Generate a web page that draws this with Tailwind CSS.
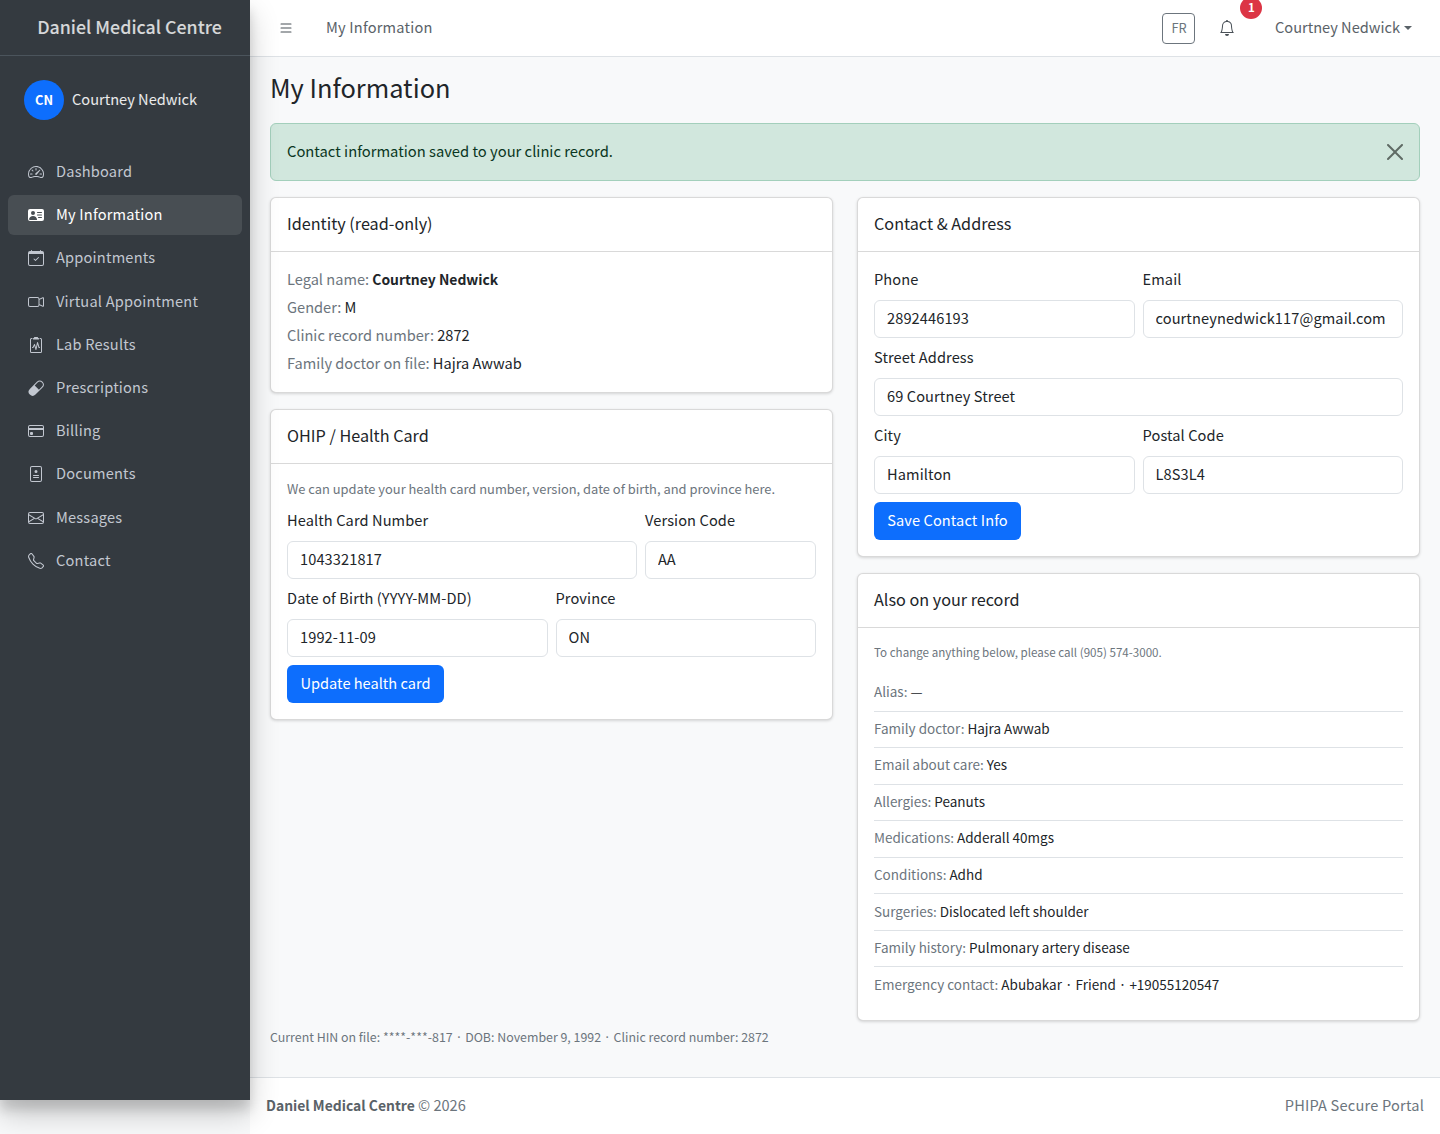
<!DOCTYPE html>
<html lang="en"><head><meta charset="utf-8"><title>My Information</title>
<script src="https://cdn.jsdelivr.net/npm/@tailwindcss/browser@4"></script></head>
<body class="bg-[#f8f9fa] font-['Noto_Sans_CJK_KR',sans-serif] text-[14.6px] leading-6 text-[#212529]">
<div class="flex w-[1440px] h-[1134px] overflow-hidden">
<aside class="w-[250px] h-[1100px] shrink-0 bg-[#343a40] shadow-[0_14px_28px_rgba(0,0,0,.2),0_10px_10px_rgba(0,0,0,.12)] z-10">
  <div class="h-[56px] border-b border-[#4b545c] flex items-center justify-center pl-[9px] pb-1 text-[17.8px] font-medium text-white/80">Daniel Medical Centre</div>
  <div class="flex items-center gap-2 pl-6 pt-6 pb-8 text-white/90">
    <div class="w-10 h-10 rounded-full bg-[#0d6efd] text-white text-[12.8px] font-bold flex items-center justify-center">CN</div>
    <span class="pb-0.5">Courtney Nedwick</span>
  </div>
  <nav class="px-2 flex flex-col gap-[3.2px] text-[#c2c7d0] tracking-[.2px]">
    <a class="h-10 flex items-center gap-3 pl-5 rounded-md"><svg class="w-4 h-4" fill="currentColor" viewBox="0 0 16 16"><path d="M8 4a.5.5 0 0 1 .5.5V6a.5.5 0 0 1-1 0V4.5A.5.5 0 0 1 8 4zM3.732 5.732a.5.5 0 0 1 .707 0l.915.914a.5.5 0 1 1-.708.708l-.914-.915a.5.5 0 0 1 0-.707zM2 10a.5.5 0 0 1 .5-.5h1.586a.5.5 0 0 1 0 1H2.5A.5.5 0 0 1 2 10zm9.5 0a.5.5 0 0 1 .5-.5h1.5a.5.5 0 0 1 0 1H12a.5.5 0 0 1-.5-.5zm.754-4.246a.389.389 0 0 0-.527-.02L7.547 9.31a.91.91 0 1 0 1.302 1.258l3.434-4.297a.389.389 0 0 0-.029-.518z"/><path fill-rule="evenodd" d="M0 10a8 8 0 1 1 15.547 2.661c-.442 1.253-1.845 1.602-2.932 1.25C11.309 13.488 9.475 13 8 13c-1.474 0-3.31.488-4.615.911-1.087.352-2.49.003-2.932-1.25A7.988 7.988 0 0 1 0 10zm8-7a7 7 0 0 0-6.603 9.329c.203.575.923.876 1.68.63C4.397 12.533 6.358 12 8 12s3.604.532 4.923.96c.757.245 1.477-.056 1.68-.631A7 7 0 0 0 8 3z"/></svg><span class="pb-0.5">Dashboard</span></a>
    <a class="h-10 flex items-center gap-3 pl-5 rounded-md bg-white/10 text-white"><svg class="w-4 h-4" fill="currentColor" viewBox="0 0 16 16"><path d="M0 4a2 2 0 0 1 2-2h12a2 2 0 0 1 2 2v8a2 2 0 0 1-2 2H2a2 2 0 0 1-2-2V4Zm9 1.5a.5.5 0 0 0 .5.5h4a.5.5 0 0 0 0-1h-4a.5.5 0 0 0-.5.5ZM9 8a.5.5 0 0 0 .5.5h4a.5.5 0 0 0 0-1h-4A.5.5 0 0 0 9 8Zm1 2.5a.5.5 0 0 0 .5.5h3a.5.5 0 0 0 0-1h-3a.5.5 0 0 0-.5.5Zm-1 2C9 10.567 7.21 9 5 9c-2.086 0-3.8 1.398-3.984 3.181A1 1 0 0 0 2 13h6.96c.026-.163.04-.33.04-.5ZM7 6a2 2 0 1 0-4 0 2 2 0 0 0 4 0Z"/></svg><span class="pb-0.5">My Information</span></a>
    <a class="h-10 flex items-center gap-3 pl-5 rounded-md"><svg class="w-4 h-4" fill="currentColor" viewBox="0 0 16 16"><path d="M10.854 7.146a.5.5 0 0 1 0 .708l-3 3a.5.5 0 0 1-.708 0l-1.5-1.5a.5.5 0 1 1 .708-.708L7.5 9.793l2.646-2.647a.5.5 0 0 1 .708 0z"/><path d="M3.5 0a.5.5 0 0 1 .5.5V1h8V.5a.5.5 0 0 1 1 0V1h1a2 2 0 0 1 2 2v11a2 2 0 0 1-2 2H2a2 2 0 0 1-2-2V3a2 2 0 0 1 2-2h1V.5a.5.5 0 0 1 .5-.5zM1 4v10a1 1 0 0 0 1 1h12a1 1 0 0 0 1-1V4H1z"/></svg><span class="pb-0.5">Appointments</span></a>
    <a class="h-10 flex items-center gap-3 pl-5 rounded-md"><svg class="w-4 h-4" fill="currentColor" viewBox="0 0 16 16"><path fill-rule="evenodd" d="M0 5a2 2 0 0 1 2-2h7.5a2 2 0 0 1 1.983 1.738l3.11-1.382A1 1 0 0 1 16 4.269v7.462a1 1 0 0 1-1.406.913l-3.111-1.382A2 2 0 0 1 9.5 13H2a2 2 0 0 1-2-2V5zm11.5 5.175 3.5 1.556V4.269l-3.5 1.556v4.35zM2 4a1 1 0 0 0-1 1v6a1 1 0 0 0 1 1h7.5a1 1 0 0 0 1-1V5a1 1 0 0 0-1-1H2z"/></svg><span class="pb-0.5">Virtual Appointment</span></a>
    <a class="h-10 flex items-center gap-3 pl-5 rounded-md"><svg class="w-4 h-4" fill="currentColor" viewBox="0 0 16 16"><path d="M9.5 0a.5.5 0 0 1 .5.5.5.5 0 0 0 .5.5.5.5 0 0 1 .5.5V2a.5.5 0 0 1-.5.5h-5A.5.5 0 0 1 5 2v-.5a.5.5 0 0 1 .5-.5.5.5 0 0 0 .5-.5.5.5 0 0 1 .5-.5h3Z"/><path d="M3 2.5a.5.5 0 0 1 .5-.5H4a.5.5 0 0 0 0-1h-.5A1.5 1.5 0 0 0 2 2.5v12A1.5 1.5 0 0 0 3.5 16h9a1.5 1.5 0 0 0 1.5-1.5v-12A1.5 1.5 0 0 0 12.5 1H12a.5.5 0 0 0 0 1h.5a.5.5 0 0 1 .5.5v12a.5.5 0 0 1-.5.5h-9a.5.5 0 0 1-.5-.5v-12Z"/><path d="M9.979 5.356a.5.5 0 0 0-.968.04L7.92 10.49l-.94-3.135a.5.5 0 0 0-.926-.08L4.69 10H4.5a.5.5 0 0 0 0 1H5a.5.5 0 0 0 .447-.276l.936-1.873 1.138 3.793a.5.5 0 0 0 .968-.04L9.58 7.51l.94 3.135A.5.5 0 0 0 11 11h.5a.5.5 0 0 0 0-1h-.128L9.979 5.356Z"/></svg><span class="pb-0.5">Lab Results</span></a>
    <a class="h-10 flex items-center gap-3 pl-5 rounded-md"><svg class="w-4 h-4" fill="currentColor" viewBox="0 0 16 16"><path d="M1.828 8.9 8.9 1.827a4 4 0 1 1 5.657 5.657l-7.07 7.071A4 4 0 1 1 1.827 8.9Zm9.128.771 2.893-2.893a3 3 0 1 0-4.243-4.242L6.713 5.429l4.243 4.242Z"/></svg><span class="pb-0.5">Prescriptions</span></a>
    <a class="h-10 flex items-center gap-3 pl-5 rounded-md"><svg class="w-4 h-4" fill="currentColor" viewBox="0 0 16 16"><path d="M0 4a2 2 0 0 1 2-2h12a2 2 0 0 1 2 2v8a2 2 0 0 1-2 2H2a2 2 0 0 1-2-2V4zm2-1a1 1 0 0 0-1 1v1h14V4a1 1 0 0 0-1-1H2zm13 4H1v5a1 1 0 0 0 1 1h12a1 1 0 0 0 1-1V7z"/><path d="M2 10a1 1 0 0 1 1-1h1a1 1 0 0 1 1 1v1a1 1 0 0 1-1 1H3a1 1 0 0 1-1-1v-1z"/></svg><span class="pb-0.5">Billing</span></a>
    <a class="h-10 flex items-center gap-3 pl-5 rounded-md"><svg class="w-4 h-4" fill="currentColor" viewBox="0 0 16 16"><path d="M8 7a1.5 1.5 0 1 0 0-3 1.5 1.5 0 0 0 0 3z"/><path d="M5 9.5a.5.5 0 0 1 .5-.5h5a.5.5 0 0 1 0 1h-5a.5.5 0 0 1-.5-.5zm0 2a.5.5 0 0 1 .5-.5h5a.5.5 0 0 1 0 1h-5a.5.5 0 0 1-.5-.5z"/><path d="M2 2a2 2 0 0 1 2-2h8a2 2 0 0 1 2 2v12a2 2 0 0 1-2 2H4a2 2 0 0 1-2-2V2zm10-1H4a1 1 0 0 0-1 1v12a1 1 0 0 0 1 1h8a1 1 0 0 0 1-1V2a1 1 0 0 0-1-1z"/></svg><span class="pb-0.5">Documents</span></a>
    <a class="h-10 flex items-center gap-3 pl-5 rounded-md"><svg class="w-4 h-4" fill="currentColor" viewBox="0 0 16 16"><path d="M0 4a2 2 0 0 1 2-2h12a2 2 0 0 1 2 2v8a2 2 0 0 1-2 2H2a2 2 0 0 1-2-2V4Zm2-1a1 1 0 0 0-1 1v.217l7 4.2 7-4.2V4a1 1 0 0 0-1-1H2Zm13 2.383-4.708 2.825L15 11.105V5.383Zm-.034 6.876-5.64-3.471L8 9.583l-1.326-.795-5.64 3.47A1 1 0 0 0 2 13h12a1 1 0 0 0 .966-.741ZM1 11.105l4.708-2.897L1 5.383v5.722Z"/></svg><span class="pb-0.5">Messages</span></a>
    <a class="h-10 flex items-center gap-3 pl-5 rounded-md"><svg class="w-4 h-4" fill="currentColor" viewBox="0 0 16 16"><path d="M3.654 1.328a.678.678 0 0 0-1.015-.063L1.605 2.3c-.483.484-.661 1.169-.45 1.77a17.568 17.568 0 0 0 4.168 6.608 17.569 17.569 0 0 0 6.608 4.168c.601.211 1.286.033 1.77-.45l1.034-1.034a.678.678 0 0 0-.063-1.015l-2.307-1.794a.678.678 0 0 0-.58-.122l-2.19.547a1.745 1.745 0 0 1-1.657-.459L5.482 8.062a1.745 1.745 0 0 1-.46-1.657l.548-2.19a.678.678 0 0 0-.122-.58L3.654 1.328zM1.884.511a1.745 1.745 0 0 1 2.612.163L6.29 2.98c.329.423.445.974.315 1.494l-.547 2.19a.678.678 0 0 0 .178.643l2.457 2.457a.678.678 0 0 0 .644.178l2.189-.547a1.745 1.745 0 0 1 1.494.315l2.306 1.794c.829.645.905 1.87.163 2.611l-1.034 1.034c-.74.74-1.846 1.065-2.877.702a18.634 18.634 0 0 1-7.01-4.42 18.634 18.634 0 0 1-4.42-7.009c-.362-1.03-.037-2.137.703-2.877L1.885.511z"/></svg><span class="pb-0.5">Contact</span></a>
  </nav>
</aside>
<div class="w-[1190px] flex flex-col bg-[#f8f9fa]">
  <header class="h-[57px] shrink-0 bg-white border-b border-[#dee2e6] flex items-center pl-7 pr-7 text-[#6c757d]">
    <svg class="w-4 h-4 text-[#495057]" fill="currentColor" viewBox="0 0 16 16"><path fill-rule="evenodd" d="M2.5 12a.5.5 0 0 1 .5-.5h10a.5.5 0 0 1 0 1H3a.5.5 0 0 1-.5-.5zm0-4a.5.5 0 0 1 .5-.5h10a.5.5 0 0 1 0 1H3a.5.5 0 0 1-.5-.5zm0-4a.5.5 0 0 1 .5-.5h10a.5.5 0 0 1 0 1H3a.5.5 0 0 1-.5-.5z"/></svg>
    <span class="ml-8 pb-0.5 tracking-[.2px] text-[#5a6268]">My Information</span>
    <div class="ml-auto w-[33px] h-[31px] border border-[#6c757d] rounded pb-px text-[12.8px] flex items-center justify-center">FR</div>
    <div class="relative ml-6 w-4 h-4 text-[#495057]">
      <svg class="w-4 h-4" fill="currentColor" viewBox="0 0 16 16"><path d="M8 16a2 2 0 0 0 2-2H6a2 2 0 0 0 2 2zM8 1.918l-.797.161A4.002 4.002 0 0 0 4 6c0 .628-.134 2.197-.459 3.742-.16.767-.376 1.566-.663 2.258h10.244c-.287-.692-.502-1.49-.663-2.258C12.134 8.197 12 6.628 12 6a4.002 4.002 0 0 0-3.203-3.92L8 1.917zM14.22 12c.223.447.481.801.78 1H1c.299-.199.557-.553.78-1C2.68 10.2 3 6.88 3 6c0-2.42 1.72-4.44 4.005-4.901a1 1 0 1 1 1.99 0A5.002 5.002 0 0 1 13 6c0 .88.32 4.2 1.22 6z"/></svg>
      <span class="absolute left-[21px] top-[-23px] w-[22px] h-[22px] rounded-full bg-[#dc3545] text-white text-[11.5px] font-semibold pb-0.5 flex items-center justify-center">1</span>
    </div>
    <span class="ml-[39.5px] pb-0.5 text-[#5a6268]">Courtney Nedwick</span>
    <span class="ml-[4px] w-0 h-0 border-x-[4.8px] border-x-transparent border-t-[4.8px] border-t-[#5a6268]"></span>
  </header>
  <main class="flex-1 px-5 pt-4">
    <h1 class="text-[25.4px] leading-[28px] text-[#212529] mb-[22px] font-normal">My Information</h1>
    <div class="h-[58px] bg-[#d1e7dd] border border-[#a3cfbb] rounded-md flex items-center justify-between pl-4 pr-4 text-[#0a3622] mb-4">
      <span class="pb-0.5 text-[14.75px]">Contact information saved to your clinic record.</span>
      <svg class="w-4 h-4 text-[#5f6b65]" viewBox="0 0 16 16" fill="currentColor"><path d="M.293.293a1 1 0 0 1 1.414 0L8 6.586 14.293.293a1 1 0 1 1 1.414 1.414L9.414 8l6.293 6.293a1 1 0 0 1-1.414 1.414L8 9.414l-6.293 6.293a1 1 0 0 1-1.414-1.414L6.586 8 .293 1.707a1 1 0 0 1 0-1.414z"/></svg>
    </div>
    <div class="grid grid-cols-2 gap-x-6 items-start">
      <div class="flex flex-col gap-4">
        <section class="bg-white border border-black/15 rounded-md shadow-[0_1px_3px_rgba(0,0,0,.15)]">
          <h2 class="h-[54px] px-4 pb-1 flex items-center border-b border-black/15 text-[16.2px] font-normal">Identity (read-only)</h2>
          <div class="px-4 pt-[13px] pb-[15px] leading-7 text-[#6c757d]">
            <div>Legal name: <b class="text-[#212529] font-semibold text-[13.9px]">Courtney Nedwick</b></div>
            <div>Gender: <span class="text-[#212529]">M</span></div>
            <div>Clinic record number: <span class="text-[#212529]">2872</span></div>
            <div>Family doctor on file: <span class="text-[#212529]">Hajra Awwab</span></div>
          </div>
        </section>
        <section class="bg-white border border-black/15 rounded-md shadow-[0_1px_3px_rgba(0,0,0,.15)]">
          <h2 class="h-[54px] px-4 pb-1 flex items-center border-b border-black/15 text-[16.2px] font-normal">OHIP / Health Card</h2>
          <div class="p-4">
            <p class="text-[12.9px] leading-[17px] text-[#6c757d] mb-3">We can update your health card number, version, date of birth, and province here.</p>
            <div class="grid grid-cols-[350px_1fr] gap-x-2 leading-[22px] tracking-[.1px]">
              <label class="block">Health Card Number<input value="1043321817" class="block w-full h-[38px] mt-[10px] pb-[3px] border border-[#dee2e6] rounded-md px-3 bg-white"></label>
              <label class="block">Version Code<input value="AA" class="block w-full h-[38px] mt-[10px] pb-[3px] border border-[#dee2e6] rounded-md px-3 bg-white"></label>
            </div>
            <div class="grid grid-cols-2 gap-x-2 mt-2 leading-[22px] tracking-[.1px]">
              <label class="block">Date of Birth (YYYY-MM-DD)<input value="1992-11-09" class="block w-full h-[38px] mt-[10px] pb-[3px] border border-[#dee2e6] rounded-md px-3 bg-white"></label>
              <label class="block">Province<input value="ON" class="block w-full h-[38px] mt-[10px] pb-[3px] border border-[#dee2e6] rounded-md px-3 bg-white"></label>
            </div>
            <button class="mt-2 h-[38px] w-[157px] pb-0.5 rounded-md bg-[#0d6efd] text-white">Update health card</button>
          </div>
        </section>
      </div>
      <div class="flex flex-col gap-4">
        <section class="bg-white border border-black/15 rounded-md shadow-[0_1px_3px_rgba(0,0,0,.15)]">
          <h2 class="h-[54px] px-4 pb-1 flex items-center border-b border-black/15 text-[16.2px] font-normal">Contact &amp; Address</h2>
          <div class="p-4 tracking-[.1px] leading-[22px]">
            <div class="grid grid-cols-2 gap-x-2">
              <label class="block">Phone<input value="2892446193" class="block w-full h-[38px] mt-[10px] pb-[3px] border border-[#dee2e6] rounded-md px-3 bg-white"></label>
              <label class="block">Email<input value="courtneynedwick117@gmail.com" class="block w-full h-[38px] mt-[10px] pb-[3px] border border-[#dee2e6] rounded-md px-3 bg-white"></label>
            </div>
            <label class="block mt-2">Street Address<input value="69 Courtney Street" class="block w-full h-[38px] mt-[10px] pb-[3px] border border-[#dee2e6] rounded-md px-3 bg-white"></label>
            <div class="grid grid-cols-2 gap-x-2 mt-2">
              <label class="block">City<input value="Hamilton" class="block w-full h-[38px] mt-[10px] pb-[3px] border border-[#dee2e6] rounded-md px-3 bg-white"></label>
              <label class="block">Postal Code<input value="L8S3L4" class="block w-full h-[38px] mt-[10px] pb-[3px] border border-[#dee2e6] rounded-md px-3 bg-white"></label>
            </div>
            <button class="mt-2 h-[38px] w-[147px] pb-0.5 rounded-md bg-[#0d6efd] text-white">Save Contact Info</button>
          </div>
        </section>
        <section class="bg-white border border-black/15 rounded-md shadow-[0_1px_3px_rgba(0,0,0,.15)]">
          <h2 class="h-[54px] px-4 pb-1 flex items-center border-b border-black/15 text-[16.2px] font-normal">Also on your record</h2>
          <div class="p-4 text-[#6c757d] text-[13.5px]">
            <p class="text-[11.6px] leading-[16px] mb-[15px]">To change anything below, please call (905) 574-3000.</p>
            <div class="h-[36.55px] pb-[3px] flex items-center gap-[3px] border-b border-[#dee2e6]">Alias: <span class="text-[#212529]">—</span></div>
            <div class="h-[36.55px] pb-[3px] flex items-center gap-[3px] border-b border-[#dee2e6]">Family doctor: <span class="text-[#212529]">Hajra Awwab</span></div>
            <div class="h-[36.55px] pb-[3px] flex items-center gap-[3px] border-b border-[#dee2e6]">Email about care: <span class="text-[#212529]">Yes</span></div>
            <div class="h-[36.55px] pb-[3px] flex items-center gap-[3px] border-b border-[#dee2e6]">Allergies: <span class="text-[#212529]">Peanuts</span></div>
            <div class="h-[36.55px] pb-[3px] flex items-center gap-[3px] border-b border-[#dee2e6]">Medications: <span class="text-[#212529]">Adderall 40mgs</span></div>
            <div class="h-[36.55px] pb-[3px] flex items-center gap-[3px] border-b border-[#dee2e6]">Conditions: <span class="text-[#212529]">Adhd</span></div>
            <div class="h-[36.55px] pb-[3px] flex items-center gap-[3px] border-b border-[#dee2e6]">Surgeries: <span class="text-[#212529]">Dislocated left shoulder</span></div>
            <div class="h-[36.55px] pb-[3px] flex items-center gap-[3px] border-b border-[#dee2e6]">Family history: <span class="text-[#212529]">Pulmonary artery disease</span></div>
            <div class="h-[36.55px] pb-[3px] flex items-center gap-[3px]">Emergency contact: <span class="text-[#212529]">Abubakar · Friend · +19055120547</span></div>
          </div>
        </section>
      </div>
    </div>
    <p class="mt-[6px] text-[12.4px] leading-[21px] text-[#6c757d]">Current HIN on file: ****-***-817 · DOB: November 9, 1992 · Clinic record number: 2872</p>
  </main>
  <footer class="h-[57px] shrink-0 bg-white border-t border-[#dee2e6] px-4 pb-0.5 flex items-center justify-between text-[#6c757d]">
    <span><b class="font-semibold text-[#5a6268] text-[13.9px]">Daniel Medical Centre</b> © 2026</span>
    <span class="tracking-[.2px]">PHIPA Secure Portal</span>
  </footer>
</div>
</div>
</body></html>
